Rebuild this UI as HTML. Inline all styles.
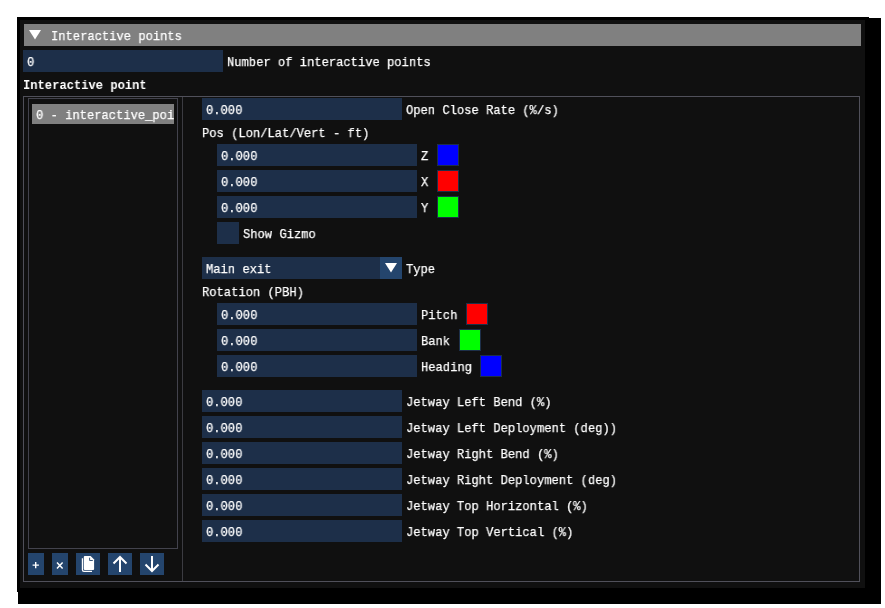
<!DOCTYPE html>
<html><head><meta charset="utf-8"><style>
html,body{margin:0;padding:0;background:#fff;width:885px;height:608px;overflow:hidden;position:relative}
body>div,body>svg{position:absolute}
div{position:absolute}
.t{font-family:"Liberation Mono",monospace;font-size:13.4px;line-height:16px;white-space:pre;color:#fff;transform-origin:0 0;transform:scaleX(0.9053);will-change:transform;-webkit-text-stroke:0.25px #fff}
.b{font-weight:bold;-webkit-text-stroke:0}
</style></head><body>
<div style="left:18px;top:18px;width:863px;height:586px;background:#000;"></div>
<div style="left:17px;top:17px;width:852px;height:575px;background:#000;"></div>
<div style="left:20px;top:20px;width:845px;height:568px;background:#101010;"></div>
<div style="left:24px;top:24px;width:837px;height:22px;background:#808080;"></div>
<svg style="position:absolute;left:29px;top:30px" width="12" height="10"><polygon points="0,0 12,0 6,9.5" fill="#fff"/></svg>
<div class="t" style="left:51px;top:29px;color:#fff">Interactive points</div>
<div style="left:23px;top:50px;width:200px;height:22px;background:#1d2f49;"></div>
<div class="t" style="left:27px;top:55px;color:#fff">0</div>
<div class="t" style="left:227px;top:55px;color:#fff">Number of interactive points</div>
<div class="t b" style="left:23px;top:78px;color:#fff">Interactive point</div>
<div style="left:23px;top:96px;width:837px;height:1px;background:#50505a;"></div>
<div style="left:23px;top:581px;width:837px;height:1px;background:#50505a;"></div>
<div style="left:23px;top:96px;width:1px;height:486px;background:#50505a;"></div>
<div style="left:859px;top:96px;width:1px;height:486px;background:#50505a;"></div>
<div style="left:182px;top:97px;width:1px;height:484px;background:#3c3c42;"></div>
<div style="left:28px;top:98px;width:150px;height:1px;background:#43434d;"></div>
<div style="left:28px;top:548px;width:150px;height:1px;background:#43434d;"></div>
<div style="left:28px;top:98px;width:1px;height:451px;background:#43434d;"></div>
<div style="left:177px;top:98px;width:1px;height:451px;background:#43434d;"></div>
<div style="left:32px;top:104px;width:142px;height:20px;background:#808080;overflow:hidden"><div class="t" style="left:4px;top:4px">0 - interactive_point</div></div>
<div style="left:28px;top:553px;width:16px;height:22px;background:#24456d;"></div>
<div style="left:52px;top:553px;width:16px;height:22px;background:#24456d;"></div>
<div style="left:76px;top:553px;width:24px;height:22px;background:#24456d;"></div>
<div style="left:108px;top:553px;width:24px;height:22px;background:#24456d;"></div>
<div style="left:140px;top:553px;width:24px;height:22px;background:#24456d;"></div>
<svg style="position:absolute;left:28px;top:553px" width="16" height="22"><path d="M4.6 12.1 H10.9 M7.7 9.1 V15.2" stroke="#fff" stroke-width="1.4"/></svg>
<svg style="position:absolute;left:52px;top:553px" width="16" height="22"><path d="M5 9.6 L10.6 15.6 M10.6 9.6 L5 15.6" stroke="#fff" stroke-width="1.45"/></svg>
<svg style="position:absolute;left:76px;top:553px" width="24" height="22"><path d="M6.45 5.2 V16.8 Q6.45 18.35 8 18.35 H16" fill="none" stroke="#fff" stroke-width="1.3"/><path d="M8.8 2.9 H14.6 L18.1 6.4 V16 Q18.1 17 17.1 17 H8.8 Q7.8 17 7.8 16 V3.9 Q7.8 2.9 8.8 2.9 Z" fill="#fff"/><path d="M13.6 4.7 V7.5 H16.8" fill="none" stroke="#24456d" stroke-width="0.9"/></svg>
<svg style="position:absolute;left:108px;top:553px" width="24" height="22"><path d="M12 4 v15 M5.5 10.5 L12 4 L18.5 10.5" fill="none" stroke="#fff" stroke-width="2"/></svg>
<svg style="position:absolute;left:140px;top:553px" width="24" height="22"><path d="M12 3 v15 M5.5 11.5 L12 18 L18.5 11.5" fill="none" stroke="#fff" stroke-width="2"/></svg>
<div style="left:202px;top:98px;width:200px;height:22px;background:#1d2f49;"></div>
<div class="t" style="left:206px;top:103px;color:#fff">0.000</div>
<div class="t" style="left:406px;top:103px;color:#fff">Open Close Rate (%/s)</div>
<div class="t" style="left:202px;top:126px;color:#fff">Pos (Lon/Lat/Vert - ft)</div>
<div style="left:217px;top:144px;width:200px;height:22px;background:#1d2f49;"></div>
<div class="t" style="left:221px;top:149px;color:#fff">0.000</div>
<div class="t" style="left:421px;top:149px;color:#fff">Z</div>
<div style="left:437px;top:144px;width:22px;height:22px;background:#1d2f49;"></div>
<div style="left:438px;top:145px;width:20px;height:20px;background:#0000ff;"></div>
<div style="left:217px;top:170px;width:200px;height:22px;background:#1d2f49;"></div>
<div class="t" style="left:221px;top:175px;color:#fff">0.000</div>
<div class="t" style="left:421px;top:175px;color:#fff">X</div>
<div style="left:437px;top:170px;width:22px;height:22px;background:#1d2f49;"></div>
<div style="left:438px;top:171px;width:20px;height:20px;background:#ff0000;"></div>
<div style="left:217px;top:196px;width:200px;height:22px;background:#1d2f49;"></div>
<div class="t" style="left:221px;top:201px;color:#fff">0.000</div>
<div class="t" style="left:421px;top:201px;color:#fff">Y</div>
<div style="left:437px;top:196px;width:22px;height:22px;background:#1d2f49;"></div>
<div style="left:438px;top:197px;width:20px;height:20px;background:#00ff00;"></div>
<div style="left:217px;top:222px;width:22px;height:22px;background:#1d2f49;"></div>
<div class="t" style="left:243px;top:227px;color:#fff">Show Gizmo</div>
<div style="left:202px;top:257px;width:178px;height:22px;background:#1d2f49;"></div>
<div style="left:380px;top:257px;width:22px;height:22px;background:#24456d;"></div>
<svg style="position:absolute;left:385px;top:263px" width="12" height="10"><polygon points="0,0 12,0 6,9.5" fill="#fff"/></svg>
<div class="t" style="left:206px;top:262px;color:#fff">Main exit</div>
<div class="t" style="left:406px;top:262px;color:#fff">Type</div>
<div class="t" style="left:202px;top:285px;color:#fff">Rotation (PBH)</div>
<div style="left:217px;top:303px;width:200px;height:22px;background:#1d2f49;"></div>
<div class="t" style="left:221px;top:308px;color:#fff">0.000</div>
<div class="t" style="left:421px;top:308px;color:#fff">Pitch</div>
<div style="left:466px;top:303px;width:22px;height:22px;background:#1d2f49;"></div>
<div style="left:467px;top:304px;width:20px;height:20px;background:#ff0000;"></div>
<div style="left:217px;top:329px;width:200px;height:22px;background:#1d2f49;"></div>
<div class="t" style="left:221px;top:334px;color:#fff">0.000</div>
<div class="t" style="left:421px;top:334px;color:#fff">Bank</div>
<div style="left:459px;top:329px;width:22px;height:22px;background:#1d2f49;"></div>
<div style="left:460px;top:330px;width:20px;height:20px;background:#00ff00;"></div>
<div style="left:217px;top:355px;width:200px;height:22px;background:#1d2f49;"></div>
<div class="t" style="left:221px;top:360px;color:#fff">0.000</div>
<div class="t" style="left:421px;top:360px;color:#fff">Heading</div>
<div style="left:480px;top:355px;width:22px;height:22px;background:#1d2f49;"></div>
<div style="left:481px;top:356px;width:20px;height:20px;background:#0000ff;"></div>
<div style="left:202px;top:390px;width:200px;height:22px;background:#1d2f49;"></div>
<div class="t" style="left:206px;top:395px;color:#fff">0.000</div>
<div class="t" style="left:406px;top:395px;color:#fff">Jetway Left Bend (%)</div>
<div style="left:202px;top:416px;width:200px;height:22px;background:#1d2f49;"></div>
<div class="t" style="left:206px;top:421px;color:#fff">0.000</div>
<div class="t" style="left:406px;top:421px;color:#fff">Jetway Left Deployment (deg))</div>
<div style="left:202px;top:442px;width:200px;height:22px;background:#1d2f49;"></div>
<div class="t" style="left:206px;top:447px;color:#fff">0.000</div>
<div class="t" style="left:406px;top:447px;color:#fff">Jetway Right Bend (%)</div>
<div style="left:202px;top:468px;width:200px;height:22px;background:#1d2f49;"></div>
<div class="t" style="left:206px;top:473px;color:#fff">0.000</div>
<div class="t" style="left:406px;top:473px;color:#fff">Jetway Right Deployment (deg)</div>
<div style="left:202px;top:494px;width:200px;height:22px;background:#1d2f49;"></div>
<div class="t" style="left:206px;top:499px;color:#fff">0.000</div>
<div class="t" style="left:406px;top:499px;color:#fff">Jetway Top Horizontal (%)</div>
<div style="left:202px;top:520px;width:200px;height:22px;background:#1d2f49;"></div>
<div class="t" style="left:206px;top:525px;color:#fff">0.000</div>
<div class="t" style="left:406px;top:525px;color:#fff">Jetway Top Vertical (%)</div>
</body></html>
